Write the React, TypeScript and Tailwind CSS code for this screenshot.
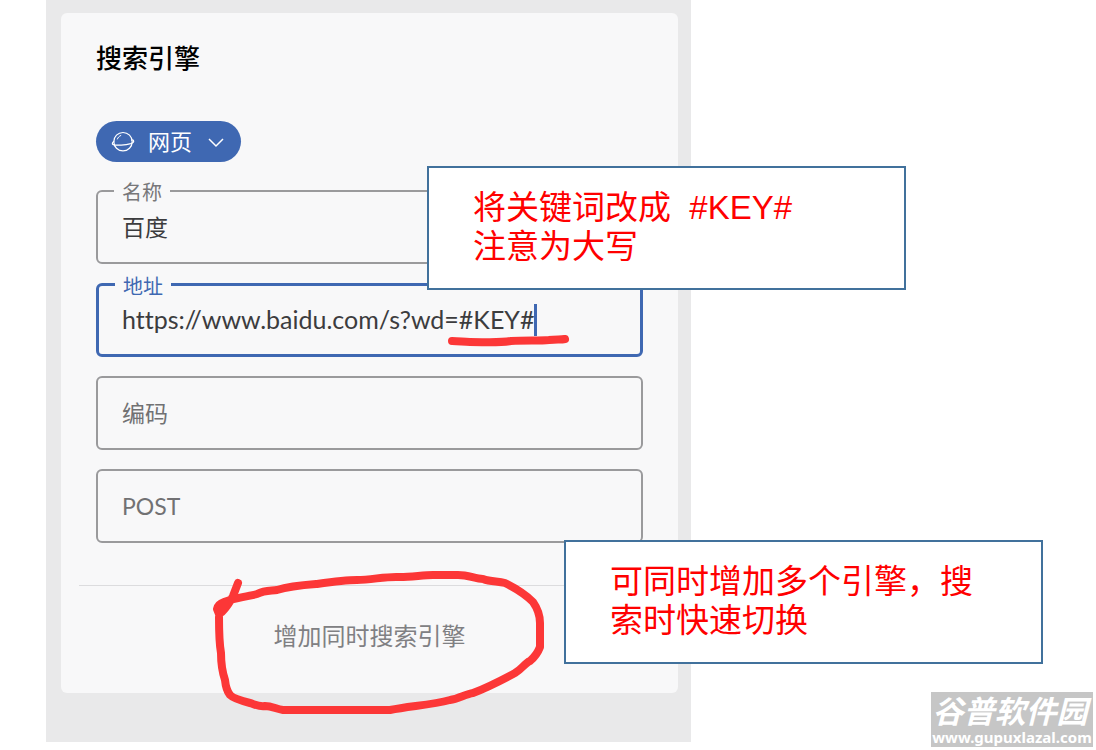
import { useState } from 'react';
import type { ReactNode } from 'react';

type FieldProps = {
  id: string
  label: string
  value: string
  onChange: (value: string) => void
  active?: boolean
}

function Field({ id, label, value, onChange, active }: FieldProps) {
  return (
    <div
      className={`relative flex h-[74px] items-center rounded-md ${active ? 'border-[3px] border-[#3f68b2] px-[23px]' : 'border-2 border-[#9a9a9c] px-6'}`}
    >
      {value !== '' && (
        <label
          htmlFor={id}
          className={`absolute -top-3 left-4 bg-[#f8f8f9] px-2 text-[20px] leading-6 ${active ? 'text-[#3f68b2]' : 'text-[#77777a]'}`}
        >
          {label}
        </label>
      )}
      <input
        id={id}
        type="text"
        value={value}
        placeholder={label}
        aria-label={label}
        onChange={(e) => onChange(e.target.value)}
        className={`bg-transparent text-[#3c3c3e] outline-none placeholder:text-[#717173] ${active ? 'field-sizing-content text-[25px]' : 'w-full text-[23px]'}`}
      />
      {active && <span className="h-8 w-[3px] bg-[#3f68b2]" aria-hidden="true"></span>}
    </div>
  )
}

function Note({ className, children }: { className: string; children: ReactNode }) {
  return (
    <aside
      className={`absolute h-[124px] w-[479px] border-2 border-[#41719c] bg-white pt-5 pl-11 font-['Liberation_Sans','Noto_Sans_CJK_SC',sans-serif] text-[33px] leading-[39px] text-[#ff0000] ${className}`}
    >
      {children}
    </aside>
  )
}

export default function App() {

  const [name, setName] = useState('百度');
  const [address, setAddress] = useState('https://www.baidu.com/s?wd=#KEY#');
  const [encoding, setEncoding] = useState('');
  const [post, setPost] = useState('');

  return (
    <main className="relative min-h-screen overflow-hidden bg-white pl-[46px] font-['Lato','Noto_Sans_CJK_SC',sans-serif] [font-variant-ligatures:none]">

      <div className="relative w-full max-w-[645px] bg-[#e9e9ea] pt-[13px] pr-[13px] pb-[49px] pl-[15px]">
        <section className="rounded-md bg-[#f8f8f9] pt-[29px]">
          <div className="px-[35px]">
            <h1 className="text-[26px] leading-8 font-medium text-black">搜索引擎</h1>

            {/* Type */}
            <div className="relative mt-[47px] flex h-[41px] w-[145px] items-center rounded-full bg-[#3f68b2] text-white">
              <svg className="absolute left-[15px] size-6" viewBox="0 0 24 24" fill="none" stroke="currentColor" strokeLinecap="round" aria-hidden="true">
                <circle cx="12" cy="11.7" r="9.2" strokeWidth="1.2" />
                <path strokeWidth="1.2" d="M2.8 11.4C1.2 12.6.8 14.2 2.2 14.6c3.4 1 12 .5 17.6-1 2.6-.8 3.4-2.2 2.6-3.2-.4-.5-1-.5-1.6-.2" />
                <path strokeWidth="1" d="M6.4 9c.6-1.6 1.7-2.8 3.4-3.5" />
              </svg>
              <select
                aria-label="类型"
                defaultValue="web"
                className="h-full w-full appearance-none rounded-full bg-transparent pl-[52px] text-[22px] outline-none"
              >
                <option value="web">网页</option>
              </select>
              <svg className="pointer-events-none absolute right-4 h-4 w-[18px]" viewBox="0 0 18 16" fill="none" stroke="currentColor" strokeWidth="1.5" aria-hidden="true">
                <path d="M2 5l7 7 7-7" />
              </svg>
            </div>

            {/* Fields */}
            <div className="mt-7 flex flex-col gap-[19px]">
              <Field id="name" label="名称" value={name} onChange={setName} />
              <Field id="address" label="地址" value={address} onChange={setAddress} active />
              <Field id="encoding" label="编码" value={encoding} onChange={setEncoding} />
              <Field id="post" label="POST" value={post} onChange={setPost} />
            </div>
          </div>

          <div className="mx-[18px] mt-[42px] border-t border-[#dcdcde] pb-2">
            <button type="button" className="h-[99px] w-full text-2xl text-[#808083]">增加同时搜索引擎</button>
          </div>
        </section>

        {/* Pen marks */}
        <svg className="pointer-events-none absolute inset-0 size-full" fill="none" stroke="#fc3737" strokeWidth="8" strokeLinecap="round" strokeLinejoin="round" aria-hidden="true">
          <path d="M406 341C414 341 417 342 424 342C440 342 454 343 465 341C480 340 493 341 503 340C510 339 515 340 519 339" />
          <path d="M192 583L187 596Q182 606 176 612L173 614L171 609Q172 604 178 602L184 600C194 597 204 596 211 594C219 590 225 591 231 590C244 586 258 585 271 584C285 582 299 580 311 580C326 580 340 576 354 577C366 577 377 575 387 575H412C423 575 429 579 437 579C445 582 452 581 459 583C469 588 481 596 487 602Q494 612 494 623V647Q491 655 484 661C479 663 476 669 469 673C456 680 440 688 427 693C420 694 412 699 404 700C385 705 364 706 344 710H237C230 709 226 706 219 706C213 707 208 704 204 703C196 701 188 699 184 695Q180 690 179 680C176 671 175 661 175 653C173 642 173 629 173 617" />
        </svg>
      </div>

      <Note className="top-[166px] left-[427px]">
        将关键词改成&nbsp; #KEY#<br />注意为大写
      </Note>
      <Note className="top-[540px] left-[564px]">
        可同时增加多个引擎，搜<br />索时快速切换
      </Note>

      {/* Watermark */}
      <div className="absolute right-[3px] bottom-[3px] flex h-[55px] w-[162px] flex-col items-center justify-end bg-[#c6c6c6] font-['Noto_Sans','Noto_Sans_CJK_SC',sans-serif] font-bold whitespace-nowrap text-white">
        <span className="pr-1 text-[31px] leading-8 italic">谷普软件园</span>
        <span className="text-[15px] leading-5">www.gupuxlazal.com</span>
      </div>
    </main>
  )
}
